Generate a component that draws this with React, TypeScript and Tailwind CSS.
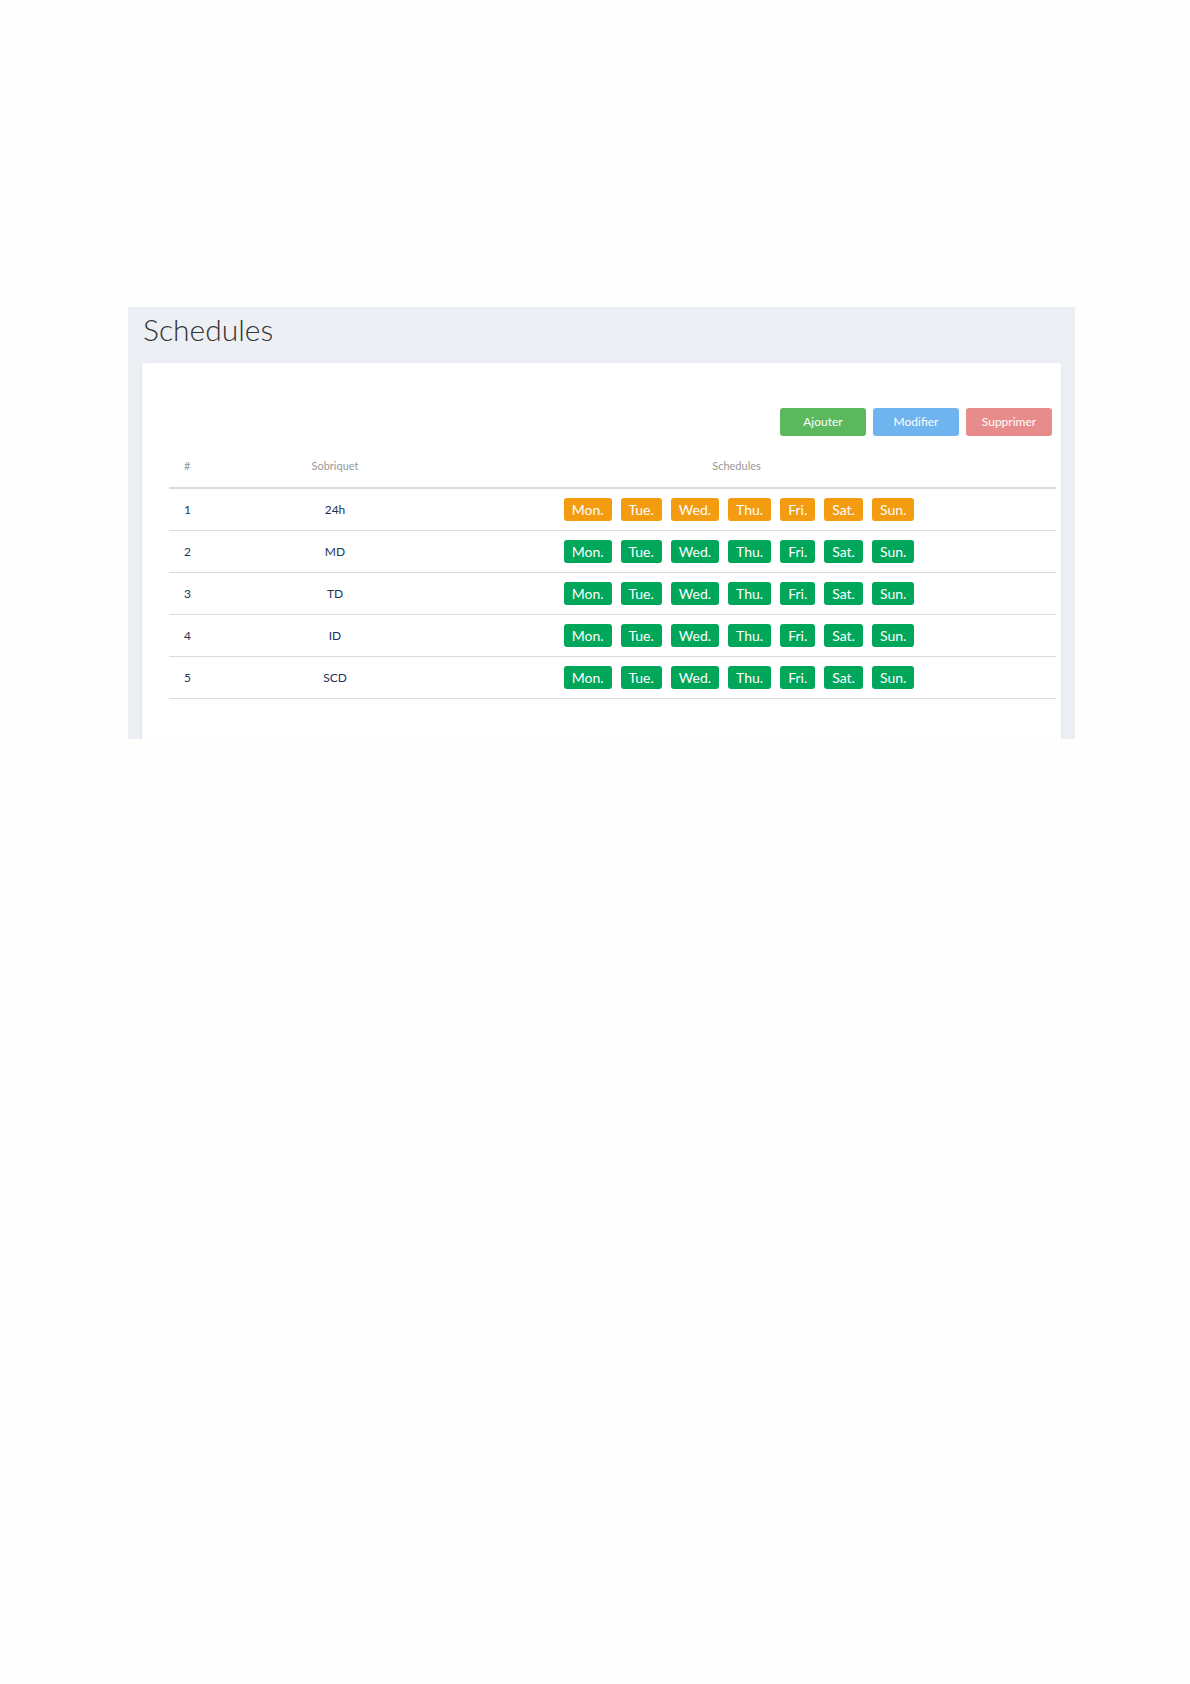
import React from 'react';

const days = ['Mon.', 'Tue.', 'Wed.', 'Thu.', 'Fri.', 'Sat.', 'Sun.'];

const rows = [
    { id: 1, name: '24h', color: 'bg-[#f39c12]' },
    { id: 2, name: 'MD', color: 'bg-[#00a65a]' },
    { id: 3, name: 'TD', color: 'bg-[#00a65a]' },
    { id: 4, name: 'ID', color: 'bg-[#00a65a]' },
    { id: 5, name: 'SCD', color: 'bg-[#00a65a]' },
];

const cols = 'grid grid-cols-[82px_168px_1fr] items-center';

export default function App() {
    return (
        <div className="min-h-[1684px] bg-[#fefefe] pt-[307px] pl-[128px]" style={{ fontFamily: 'Lato, "Open Sans", sans-serif' }}>
            <div className="w-[947px] h-[432px] overflow-hidden bg-[#eceff4] px-[14px]">
                <h1 className="text-[30px] font-light leading-[44px] text-[#333] pl-[1px] mb-[12px]">Schedules</h1>
                <div className="bg-white rounded-[3px] shadow-sm h-[420px] pl-[27px] pr-[5px] pt-[45px]">
                    <div className="flex justify-end gap-[7px] pr-[4px]">
                        <button className="w-[86px] h-[28px] rounded-[3px] bg-[#5cb85c] text-white text-[12px]">Ajouter</button>
                        <button className="w-[86px] h-[28px] rounded-[3px] bg-[#6fb4ee] text-white text-[12px]">Modifier</button>
                        <button className="w-[86px] h-[28px] rounded-[3px] bg-[#e88b8b] text-white text-[12px]">Supprimer</button>
                    </div>
                    <div className="mt-[10px]">
                        <div className={`${cols} h-[43px] border-b-2 border-[#dcdcdc] text-[11px] text-[#999]`}>
                            <span className="pl-[15px]">#</span>
                            <span className="text-center">Sobriquet</span>
                            <span className="text-center pr-[2px]">Schedules</span>
                        </div>
                        {rows.map((r) => (
                            <div key={r.id} className={`${cols} h-[42px] border-b border-[#dcdcdc] text-[12px] text-[#1d3557]`}>
                                <span className="pl-[15px]">{r.id}</span>
                                <span className="text-center">{r.name}</span>
                                <div className="flex justify-center gap-[9px] pl-[3px]">
                                    {days.map((d) => (
                                        <span key={d} className={`${r.color} h-[23px] px-[8px] rounded-[3px] text-white text-[14px] leading-[23px]`}>{d}</span>
                                    ))}
                                </div>
                            </div>
                        ))}
                    </div>
                </div>
            </div>
        </div>
    );
}
